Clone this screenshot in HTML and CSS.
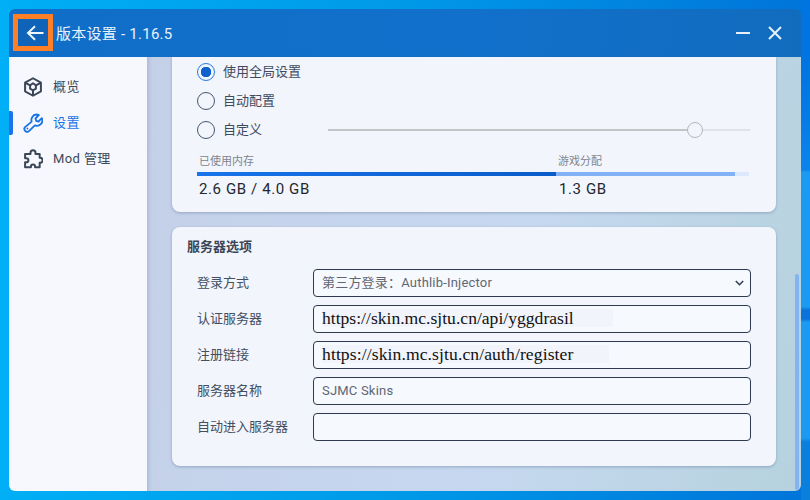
FILE: index.html
```html
<!DOCTYPE html>
<html lang="zh-CN">
<head>
<meta charset="utf-8">
<title>版本设置</title>
<link rel="stylesheet" href="styles.css">
</head>
<body>
<div class="window">
  <header class="titlebar">
    <button class="back" aria-label="返回">
      <svg width="20" height="20" viewBox="0 0 20 20"><path d="M18.500 10H3M10 3.200L3 10l7 6.800" fill="none" stroke="#eef5fc" stroke-width="2"/></svg>
    </button>
    <span class="title">版本设置 - 1.16.5</span>
    <span class="spacer"></span>
    <svg class="win-btn" width="16" height="16" viewBox="0 0 16 16"><path d="M1 8h14" stroke="#e6f0fa" stroke-width="2"/></svg>
    <svg class="win-btn" width="16" height="16" viewBox="0 0 16 16"><path d="M2 2l12 12M14 2L2 14" stroke="#e6f0fa" stroke-width="2"/></svg>
  </header>
  <div class="main">
    <nav class="sidebar">
      <a class="nav-item">
        <svg class="nav-icon" viewBox="0 0 24 24" fill="none" stroke="#3b4658" stroke-width="2.400" stroke-linejoin="round"><path d="M12 1.500l9.500 5.300v10.400L12 22.500l-9.500-5.300V6.800z"/><path d="M3 7l5.500 3M21 7l-5.500 3M12 22v-6M8.500 10L12 7.500l3.500 2.500v4L12 16l-3.500-2z"/></svg>
        <span class="nav-text">概览</span>
      </a>
      <a class="nav-item active">
        <svg class="nav-icon" viewBox="0 0 24 24" fill="none" stroke="#1a73e8" stroke-width="2.200" stroke-linejoin="round"><path d="M16 1.800a6.200 6.200 0 0 1 3 .8l-4 4 .8 2.800 2.800.8 4-4a6.500 6.500 0 0 1-8.400 8.700L7.500 21.500a3.400 3.400 0 0 1-5-4.600l7.900-6.600A6.500 6.500 0 0 1 16 1.800z"/><circle cx="5.300" cy="18.700" r=".7" fill="#1a73e8" stroke-width="1"/></svg>
        <span class="nav-text">设置</span>
      </a>
      <a class="nav-item">
        <svg class="nav-icon" viewBox="0 0 24 24" fill="none" stroke="#3b4658" stroke-width="2.400" stroke-linejoin="round"><path d="M9 6V4.500a3 3 0 0 1 6 0V6h5v4.500h.5a3 3 0 0 1 0 6H20V22h-5.500v-1a2.500 2.500 0 0 0-5 0v1H2.500v-6H4a2.500 2.500 0 0 0 0-5H2.500V6z"/></svg>
        <span class="nav-text">Mod 管理</span>
      </a>
    </nav>
    <main class="content">
      <section class="card memory">
        <label class="radio-row"><span class="radio checked"></span><span class="radio-text">使用全局设置</span></label>
        <label class="radio-row"><span class="radio"></span><span class="radio-text">自动配置</span></label>
        <label class="radio-row"><span class="radio"></span><span class="radio-text radio-label">自定义</span>
          <span class="slider"><span class="slider-fill"></span><span class="slider-thumb"></span></span>
        </label>
        <div class="mem-grid">
          <span class="mem-label">已使用内存</span>
          <span class="mem-label">游戏分配</span>
          <div class="mem-bar"><span class="bar-used"></span><span class="bar-alloc"></span></div>
          <span class="mem-value">2.6 GB / 4.0 GB</span>
          <span class="mem-value alloc">1.3 GB</span>
        </div>
      </section>
      <section class="card server">
        <h2 class="card-title">服务器选项</h2>
        <div class="form">
          <span class="field-label">登录方式</span>
          <div class="field muted cjk">第三方登录：Authlib-Injector
            <svg class="chev" width="9" height="6" viewBox="0 0 9 6"><path d="M.8 1l3.700 3.700L8.200 1" fill="none" stroke="#2e3a50" stroke-width="1.500"/></svg>
          </div>
          <span class="field-label">认证服务器</span>
          <div class="field url"><span class="url-a">https://skin.mc.sjtu.cn/api/yggdrasil</span></div>
          <span class="field-label">注册链接</span>
          <div class="field url"><span class="url-b">https://skin.mc.sjtu.cn/auth/register</span></div>
          <span class="field-label">服务器名称</span>
          <div class="field muted latin">SJMC Skins</div>
          <span class="field-label">自动进入服务器</span>
          <div class="field"></div>
        </div>
      </section>
      <span class="scrollbar"></span>
    </main>
  </div>
  <span class="highlight"></span>
</div>
</body>
</html>
```

FILE: styles.css
```css
* { box-sizing: border-box; }
html, body { margin: 0; height: 100%; }
body {
  width: 810px;
  height: 500px;
  padding: 9px;
  overflow: hidden;
  background:
    linear-gradient(180deg, #0074e0 0 62px, #0a84ea 170px, #1a9af0 172px, #1a9af0 307px, #0a72d8 310px, #0a72d8 319px, #1a9af0 322px, #1a9af0 438px, #0a7fdc 442px) right top / 9px 100% no-repeat,
    linear-gradient(90deg, #00aff5 0%, #0099e8 50%, #0074da 100%);
  font-family: Roboto, "Noto Sans CJK SC", sans-serif;
  color: #3b4658;
}
.window {
  position: relative;
  display: flex;
  flex-direction: column;
  width: 792px;
  height: 482px;
  border-radius: 6px;
  overflow: hidden;
}
.titlebar {
  display: flex;
  align-items: center;
  height: 48px;
  flex: none;
  background: linear-gradient(90deg, #106ec8, #1170cb 60%, #116cbe);
  color: #e8f1fa;
  padding: 0 18px 0 9px;
}
.back {
  width: 30px;
  height: 29px;
  padding: 0 0 0 4px;
  margin-right: 8px;
  border: 0;
  background: #0f63b8;
  display: flex;
  align-items: center;
  justify-content: center;
}
.title { font-size: 15px; letter-spacing: .25px; padding-bottom: 2px; }
.spacer { flex: 1; }
.win-btn { margin-left: 16px; }
.highlight {
  position: absolute;
  left: 4px;
  top: 5px;
  width: 40px;
  height: 37px;
  border: 5px solid #ff7f27;
}
.main { display: flex; flex: 1; min-height: 0; }
.sidebar {
  width: 138px;
  flex: none;
  background: #f6f8fd;
  padding-top: 12px;
  display: flex;
  flex-direction: column;
}
.nav-item {
  position: relative;
  display: flex;
  align-items: center;
  height: 36px;
  padding-left: 14px;
  gap: 10px;
  font-size: 13px;
  letter-spacing: .4px;
  color: #3f4858;
}
.nav-text { padding-bottom: 3px; }
.nav-icon { width: 20px; height: 20px; flex: none; }
.nav-item.active { color: #1a73e8; }
.nav-item.active::before {
  content: "";
  position: absolute;
  left: 0;
  top: 6px;
  width: 4px;
  height: 24px;
  border-radius: 0 2px 2px 0;
  background: #1a73e8;
}
.content {
  position: relative;
  flex: 1;
  padding: 0 25px;
  background: linear-gradient(100deg, #c4d0e8 0%, #c6d8f0 55%, #b6d2de 100%);
  box-shadow: inset 4px 0 4px -3px rgba(70, 90, 130, .25);
}
.card {
  background: #f2f5fb;
  border-radius: 8px;
  box-shadow: 0 1px 3px rgba(60, 80, 120, .35);
}
.memory {
  height: 155px;
  border-radius: 0 0 8px 8px;
  padding: 0 26px 0 25px;
}
.radio-row {
  display: flex;
  align-items: center;
  height: 29px;
  gap: 8px;
  font-size: 13px;
  color: #3f4a60;
}
.radio-text { padding-bottom: 2px; }
.radio-label { width: 97px; flex: none; }
.radio {
  width: 18px;
  height: 18px;
  flex: none;
  border: 1.500px solid #475670;
  border-radius: 50%;
  background: transparent;
}
.radio.checked {
  border-color: #2a78e0;
  background: radial-gradient(circle, #0f62ce 0 5px, transparent 5.500px);
}
.slider {
  position: relative;
  flex: 1;
  height: 2px;
  background: #dfe3e8;
}
.slider-fill {
  display: block;
  width: 367px;
  height: 2px;
  background: #c3c6c9;
}
.slider-thumb {
  position: absolute;
  left: 359px;
  top: -7px;
  width: 16px;
  height: 16px;
  border: 1.500px solid #b4b7ba;
  border-radius: 50%;
  background: #f2f5fb;
}
.mem-grid {
  display: grid;
  grid-template-columns: 359px 193px;
  margin-top: 9px;
  width: 552px;
}
.mem-label {
  font-size: 11px;
  color: #80858e;
  height: 19px;
  line-height: 17px;
  padding-left: 2px;
}
.mem-bar {
  grid-column: 1 / 3;
  display: flex;
  height: 4px;
  background: #dce8fb;
}
.bar-used { width: 359px; background: linear-gradient(90deg, #1874ea, #0a5ccb); }
.bar-alloc { width: 179px; background: #82b1f5; }
.mem-value {
  font-size: 15px;
  letter-spacing: .6px;
  color: #23272e;
  padding: 3px 0 0 2px;
  line-height: 20px;
}
.mem-value.alloc { padding-left: 3px; }
.server {
  height: 239px;
  margin-top: 15px;
  padding: 11px 25px 0 15px;
}
.card-title {
  margin: 0 0 13px;
  font-size: 13px;
  line-height: 18px;
  font-weight: 700;
  color: #3b4658;
}
.form {
  display: grid;
  grid-template-columns: 116px 438px;
  grid-auto-rows: 28px;
  row-gap: 8px;
  padding-left: 10px;
  align-items: center;
}
.field-label { font-size: 13px; color: #444e60; padding-bottom: 3px; }
.field {
  position: relative;
  height: 28px;
  border: 1px solid #2e3a50;
  border-radius: 4px;
  background: #f6f9fd;
  display: flex;
  align-items: center;
  padding-left: 8px;
  font-size: 13px;
  white-space: nowrap;
}
.muted { color: #5f6775; letter-spacing: .2px; }
.cjk { padding-bottom: 4px; }
.latin { padding-bottom: 2px; }
.url {
  font-family: "Liberation Serif", serif;
  font-size: 17.600px;
  color: #111;
  padding-bottom: 2px;
}
.url-a { background: #f1f4fb; padding-right: 39px; line-height: 18px; }
.url-b { background: #f1f4fb; padding-right: 36px; line-height: 18px; letter-spacing: .1px; }
.chev { position: absolute; right: 6px; top: 10px; }
.scrollbar {
  position: absolute;
  right: 2px;
  top: 217px;
  width: 4px;
  height: 216px;
  border-radius: 2px;
  background: #84b4f0;
}
```
